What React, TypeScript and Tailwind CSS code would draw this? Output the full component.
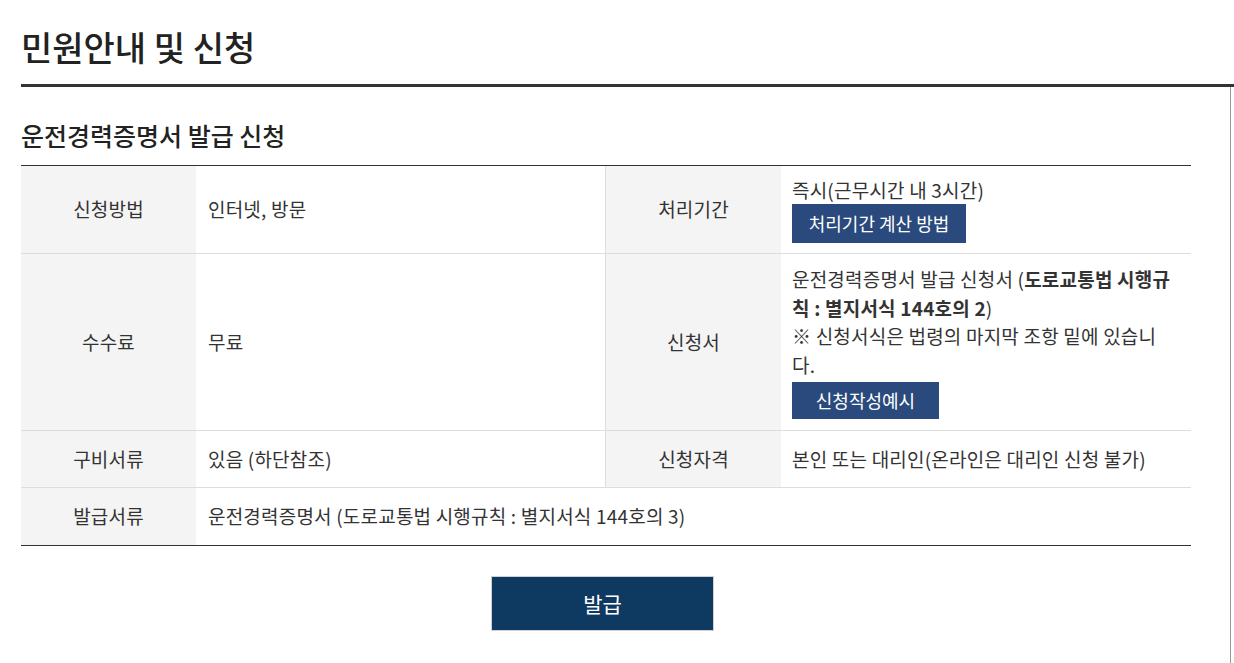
import React from "react";

const font = "font-['Noto_Sans_CJK_KR','Noto_Sans',sans-serif]";

function Th({ children }: { children: React.ReactNode }) {
  return (
    <div className="flex items-center justify-center bg-[#f4f4f4] text-[#333]">
      {children}
    </div>
  );
}

export default function App() {
  return (
    <div className={`${font} bg-white text-[#333] pl-[21px] min-h-[663px]`}>
      <h1 className="pt-[24px] pb-[14px] leading-[46px] text-[34px] font-medium text-[#222] border-b-[3px] border-[#333]">
        민원안내 및 신청
      </h1>
      <div className="border-r border-[#999] mr-[3px] pt-[30px] pb-[60px]">
        <h2 className="leading-[36px] text-[25px] font-medium text-[#222] mb-[12px]">
          운전경력증명서 발급 신청
        </h2>
        <div className="w-[1170px] border-t border-b border-[#333] text-[19px] tracking-[0.2px] leading-[28.5px]">
          {/* Row 1 */}
          <div className="grid grid-cols-[175px_410px_175px_410px] h-[88px] border-b border-[#ddd]">
            <Th>신청방법</Th>
            <div className="flex items-center pl-[12px] border-r border-[#ddd]">인터넷, 방문</div>
            <Th>처리기간</Th>
            <div className="flex flex-col justify-center items-start pl-[11px]">
              <div className="leading-[28px]">즉시(근무시간 내 3시간)</div>
              <button className="w-[174px] h-[39px] bg-[#2a4a7d] text-white text-[18px] tracking-normal leading-[39px] text-center">
                처리기간 계산 방법
              </button>
            </div>
          </div>
          {/* Row 2 */}
          <div className="grid grid-cols-[175px_410px_175px_410px] h-[177px] border-b border-[#ddd]">
            <Th>수수료</Th>
            <div className="flex items-center pl-[12px] border-r border-[#ddd]">무료</div>
            <Th>신청서</Th>
            <div className="flex flex-col justify-center items-start pl-[11px]">
              <div className="whitespace-nowrap">
                운전경력증명서 발급 신청서 (<b className="font-bold">도로교통법 시행규</b>
              </div>
              <div className="whitespace-nowrap">
                <b className="font-bold">칙 : 별지서식 144호의 2</b>)
              </div>
              <div className="whitespace-nowrap">※ 신청서식은 법령의 마지막 조항 밑에 있습니</div>
              <div className="whitespace-nowrap">다.</div>
              <button className="mt-[3px] w-[147px] h-[37px] bg-[#2a4a7d] text-white text-[18px] tracking-normal leading-[37px] text-center">
                신청작성예시
              </button>
            </div>
          </div>
          {/* Row 3 */}
          <div className="grid grid-cols-[175px_410px_175px_410px] h-[57px] border-b border-[#ddd]">
            <Th>구비서류</Th>
            <div className="flex items-center pl-[12px] border-r border-[#ddd]">있음 (하단참조)</div>
            <Th>신청자격</Th>
            <div className="flex items-center pl-[11px] whitespace-nowrap">본인 또는 대리인(온라인은 대리인 신청 불가)</div>
          </div>
          {/* Row 4 */}
          <div className="grid grid-cols-[175px_995px] h-[57px]">
            <Th>발급서류</Th>
            <div className="flex items-center pl-[12px]">
              운전경력증명서 (도로교통법 시행규칙 : 별지서식 144호의 3)
            </div>
          </div>
        </div>
        <div className="w-[1170px] flex justify-center pr-[7px] mt-[30px]">
          <button className="w-[223px] h-[55px] bg-[#0e3a62] border border-[#d0d0d0] text-white text-[21px]">
            발급
          </button>
        </div>
      </div>
    </div>
  );
}
